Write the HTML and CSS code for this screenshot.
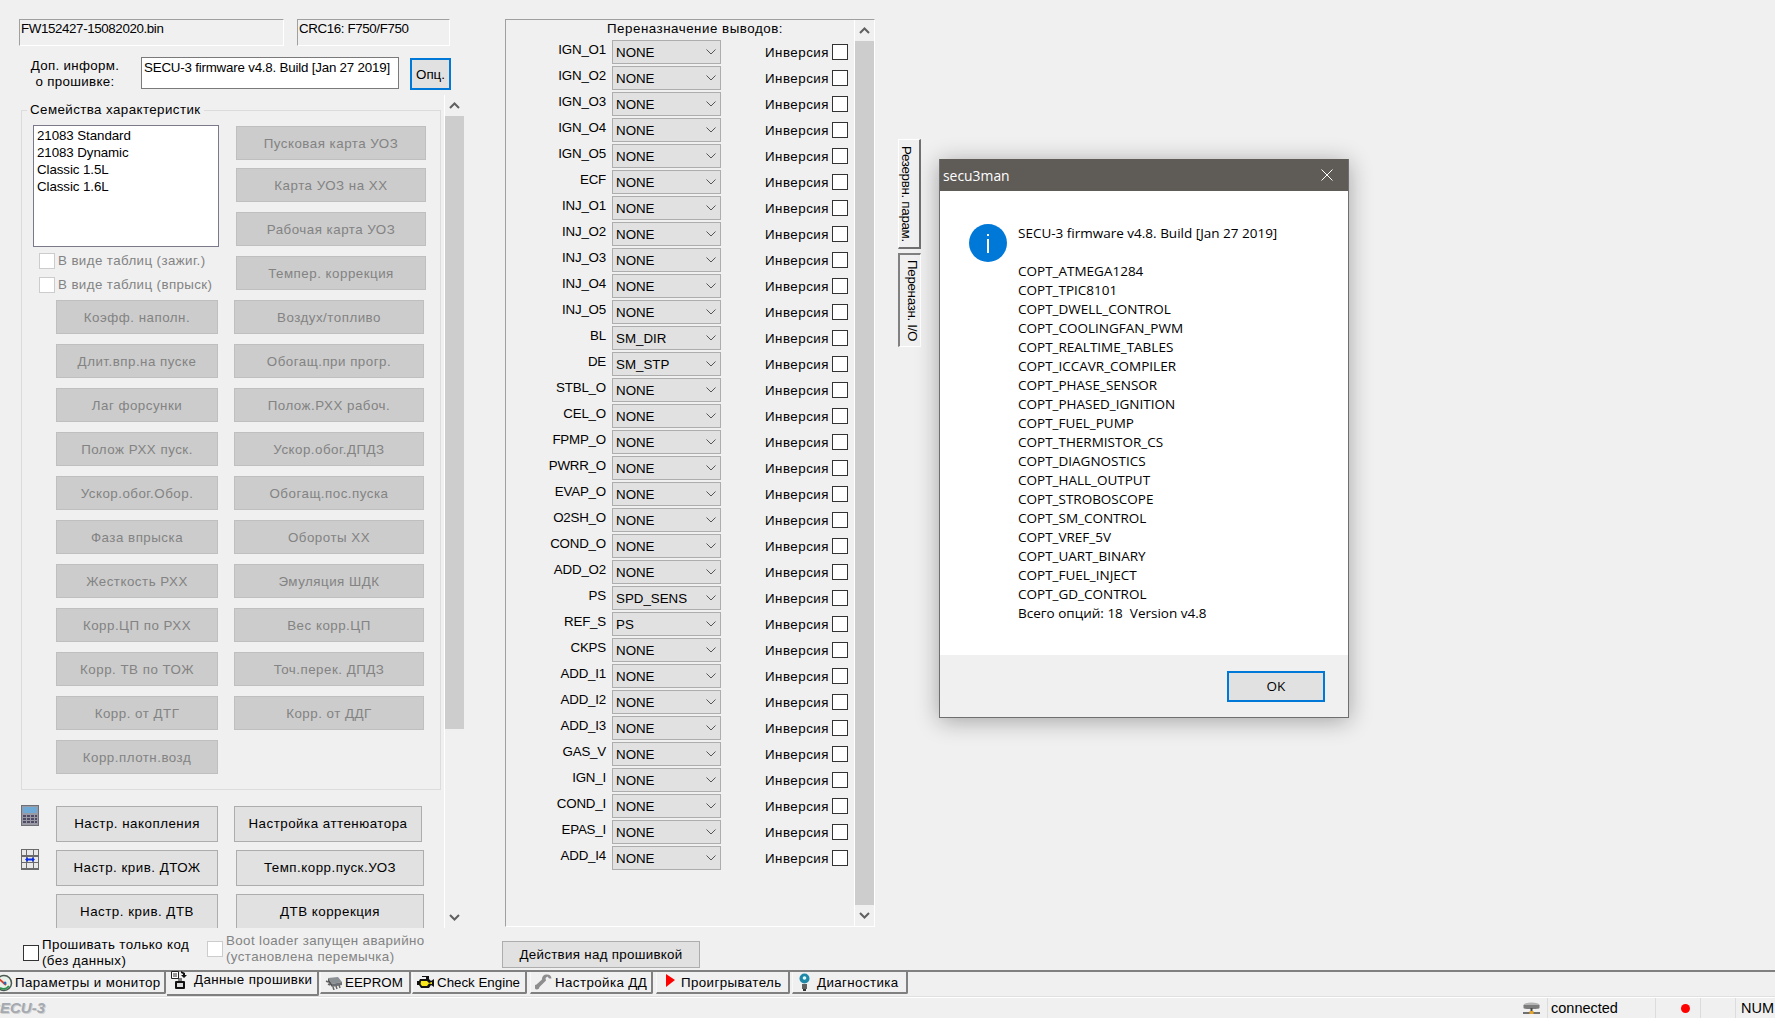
FILE: index.html
```html
<!DOCTYPE html>
<html lang="ru">
<head>
<meta charset="utf-8">
<title>secu3man</title>
<link rel="stylesheet" href="styles.css">
</head>
<body>
<div class="app">
  <div class="workspace">
    <section class="left">
      <div class="fileinfo">
        <div class="sunken name">FW152427-15082020.bin</div>
        <div class="sunken crc">CRC16: F750/F750</div>
      </div>
      <div class="inforow">
        <div class="infolabel">Доп. информ.<br>о прошивке:</div>
        <div class="edit">SECU-3 firmware v4.8. Build [Jan 27 2019]</div>
        <button class="btn opt focus">Опц.</button>
      </div>
      <div class="panel">
        <div class="panelbody">
          <div class="group">
            <div class="legend">Семейства характеристик</div>
            <div class="top">
              <div class="topleft">
                <div class="listbox">
                  <div>21083 Standard</div>
                  <div>21083 Dynamic</div>
                  <div>Classic 1.5L</div>
                  <div>Classic 1.6L</div>
                </div>
                <label class="check dis c1"><span class="box"></span>В виде таблиц (зажиг.)</label>
                <label class="check dis c2"><span class="box"></span>В виде таблиц (впрыск)</label>
              </div>
              <div class="topright">
                <button class="btn off first">Пусковая карта УОЗ</button>
                <button class="btn off">Карта УОЗ на ХХ</button>
                <button class="btn off">Рабочая карта УОЗ</button>
                <button class="btn off">Темпер. коррекция</button>
              </div>
            </div>
            <div class="pairs">
              <button class="btn off">Коэфф. наполн.</button><button class="btn off">Воздух/топливо</button>
              <button class="btn off">Длит.впр.на пуске</button><button class="btn off">Обогащ.при прогр.</button>
              <button class="btn off">Лаг форсунки</button><button class="btn off">Полож.РХХ рабоч.</button>
              <button class="btn off">Полож РХХ пуск.</button><button class="btn off">Ускор.обог.ДПДЗ</button>
              <button class="btn off">Ускор.обог.Обор.</button><button class="btn off">Обогащ.пос.пуска</button>
              <button class="btn off">Фаза впрыска</button><button class="btn off">Обороты ХХ</button>
              <button class="btn off">Жесткость РХХ</button><button class="btn off">Эмуляция ШДК</button>
              <button class="btn off">Корр.ЦП по РХХ</button><button class="btn off">Вес корр.ЦП</button>
              <button class="btn off">Корр. ТВ по ТОЖ</button><button class="btn off">Точ.перек. ДПДЗ</button>
              <button class="btn off">Корр. от ДТГ</button><button class="btn off">Корр. от ДДГ</button>
              <button class="btn off">Корр.плотн.возд</button>
            </div>
          </div>
          <div class="lower">
            <div class="lowrow">
              <span class="sideicon">
                <svg width="18" height="21" viewBox="0 0 18 21"><rect width="18" height="21" fill="#6f6f78"/><rect x="1" y="1" width="16" height="19" fill="#9a9aa4"/><rect x="2" y="2" width="14" height="6" fill="#6fa9d6"/><g fill="#4f4a66"><rect x="2" y="10" width="3" height="2"/><rect x="6" y="10" width="3" height="2"/><rect x="10" y="10" width="3" height="2"/><rect x="14" y="10" width="2" height="2"/><rect x="2" y="13" width="3" height="2"/><rect x="6" y="13" width="3" height="2"/><rect x="10" y="13" width="3" height="2"/><rect x="14" y="13" width="2" height="2"/><rect x="2" y="16" width="3" height="2"/><rect x="6" y="16" width="3" height="2"/><rect x="10" y="16" width="3" height="2"/><rect x="14" y="16" width="2" height="2"/></g></svg>
              </span>
              <button class="btn lb">Настр. накопления</button>
              <button class="btn rb gap16">Настройка аттенюатора</button>
            </div>
            <div class="lowrow">
              <span class="sideicon">
                <svg width="18" height="21" viewBox="0 0 18 21"><rect width="18" height="21" fill="#e8e8e8"/><g fill="#6a6a6a"><rect width="18" height="1"/><rect y="6" width="18" height="2"/><rect y="19" width="18" height="2"/><rect y="13" width="18" height="1"/><rect width="1" height="21"/><rect x="5" width="1" height="21"/><rect x="12" width="1" height="21"/><rect x="17" width="1" height="21"/></g><path d="M4 10.500l3-2.500v1.500h4V8l3 2.500-3 2.500v-1.500H7V13z" fill="#0a2fe8"/></svg>
              </span>
              <button class="btn lb">Настр. крив. ДТОЖ</button>
              <button class="btn rb gap18">Темп.корр.пуск.УОЗ</button>
            </div>
            <div class="lowrow">
              <span class="sideicon"></span>
              <button class="btn lb">Настр. крив. ДТВ</button>
              <button class="btn rb gap18">ДТВ коррекция</button>
            </div>
          </div>
        </div>
        <div class="scrollbar outer">
          <div class="arrow"><svg width="11" height="7" viewBox="0 0 11 7"><path d="M1 6l4.500-4.500L10 6" fill="none" stroke="#606060" stroke-width="2"/></svg></div>
          <div class="thumb lthumb"></div>
          <div class="track"></div>
          <div class="arrow"><svg width="11" height="7" viewBox="0 0 11 7"><path d="M1 1l4.500 4.500L10 1" fill="none" stroke="#606060" stroke-width="2"/></svg></div>
        </div>
      </div>
      <div class="flash">
        <label class="check code"><span class="box"></span><span>Прошивать только код<br>(без данных)</span></label>
        <label class="check dis boot"><span class="box"></span><span>Boot loader запущен аварийно<br>(установлена перемычка)</span></label>
      </div>
    </section>

    <section class="middle">
      <div class="pinframe">
        <div class="pins">
          <div class="pintitle">Переназначение выводов:</div>
          <div class="pinrow"><span class="pinname">IGN_O1</span><span class="combo">NONE</span><span class="inv">Инверсия</span><span class="box"></span></div>
          <div class="pinrow"><span class="pinname">IGN_O2</span><span class="combo">NONE</span><span class="inv">Инверсия</span><span class="box"></span></div>
          <div class="pinrow"><span class="pinname">IGN_O3</span><span class="combo">NONE</span><span class="inv">Инверсия</span><span class="box"></span></div>
          <div class="pinrow"><span class="pinname">IGN_O4</span><span class="combo">NONE</span><span class="inv">Инверсия</span><span class="box"></span></div>
          <div class="pinrow"><span class="pinname">IGN_O5</span><span class="combo">NONE</span><span class="inv">Инверсия</span><span class="box"></span></div>
          <div class="pinrow"><span class="pinname">ECF</span><span class="combo">NONE</span><span class="inv">Инверсия</span><span class="box"></span></div>
          <div class="pinrow"><span class="pinname">INJ_O1</span><span class="combo">NONE</span><span class="inv">Инверсия</span><span class="box"></span></div>
          <div class="pinrow"><span class="pinname">INJ_O2</span><span class="combo">NONE</span><span class="inv">Инверсия</span><span class="box"></span></div>
          <div class="pinrow"><span class="pinname">INJ_O3</span><span class="combo">NONE</span><span class="inv">Инверсия</span><span class="box"></span></div>
          <div class="pinrow"><span class="pinname">INJ_O4</span><span class="combo">NONE</span><span class="inv">Инверсия</span><span class="box"></span></div>
          <div class="pinrow"><span class="pinname">INJ_O5</span><span class="combo">NONE</span><span class="inv">Инверсия</span><span class="box"></span></div>
          <div class="pinrow"><span class="pinname">BL</span><span class="combo">SM_DIR</span><span class="inv">Инверсия</span><span class="box"></span></div>
          <div class="pinrow"><span class="pinname">DE</span><span class="combo">SM_STP</span><span class="inv">Инверсия</span><span class="box"></span></div>
          <div class="pinrow"><span class="pinname">STBL_O</span><span class="combo">NONE</span><span class="inv">Инверсия</span><span class="box"></span></div>
          <div class="pinrow"><span class="pinname">CEL_O</span><span class="combo">NONE</span><span class="inv">Инверсия</span><span class="box"></span></div>
          <div class="pinrow"><span class="pinname">FPMP_O</span><span class="combo">NONE</span><span class="inv">Инверсия</span><span class="box"></span></div>
          <div class="pinrow"><span class="pinname">PWRR_O</span><span class="combo">NONE</span><span class="inv">Инверсия</span><span class="box"></span></div>
          <div class="pinrow"><span class="pinname">EVAP_O</span><span class="combo">NONE</span><span class="inv">Инверсия</span><span class="box"></span></div>
          <div class="pinrow"><span class="pinname">O2SH_O</span><span class="combo">NONE</span><span class="inv">Инверсия</span><span class="box"></span></div>
          <div class="pinrow"><span class="pinname">COND_O</span><span class="combo">NONE</span><span class="inv">Инверсия</span><span class="box"></span></div>
          <div class="pinrow"><span class="pinname">ADD_O2</span><span class="combo">NONE</span><span class="inv">Инверсия</span><span class="box"></span></div>
          <div class="pinrow"><span class="pinname">PS</span><span class="combo">SPD_SENS</span><span class="inv">Инверсия</span><span class="box"></span></div>
          <div class="pinrow"><span class="pinname">REF_S</span><span class="combo">PS</span><span class="inv">Инверсия</span><span class="box"></span></div>
          <div class="pinrow"><span class="pinname">CKPS</span><span class="combo">NONE</span><span class="inv">Инверсия</span><span class="box"></span></div>
          <div class="pinrow"><span class="pinname">ADD_I1</span><span class="combo">NONE</span><span class="inv">Инверсия</span><span class="box"></span></div>
          <div class="pinrow"><span class="pinname">ADD_I2</span><span class="combo">NONE</span><span class="inv">Инверсия</span><span class="box"></span></div>
          <div class="pinrow"><span class="pinname">ADD_I3</span><span class="combo">NONE</span><span class="inv">Инверсия</span><span class="box"></span></div>
          <div class="pinrow"><span class="pinname">GAS_V</span><span class="combo">NONE</span><span class="inv">Инверсия</span><span class="box"></span></div>
          <div class="pinrow"><span class="pinname">IGN_I</span><span class="combo">NONE</span><span class="inv">Инверсия</span><span class="box"></span></div>
          <div class="pinrow"><span class="pinname">COND_I</span><span class="combo">NONE</span><span class="inv">Инверсия</span><span class="box"></span></div>
          <div class="pinrow"><span class="pinname">EPAS_I</span><span class="combo">NONE</span><span class="inv">Инверсия</span><span class="box"></span></div>
          <div class="pinrow"><span class="pinname">ADD_I4</span><span class="combo">NONE</span><span class="inv">Инверсия</span><span class="box"></span></div>
        </div>
        <div class="scrollbar inner">
          <div class="arrow"><svg width="11" height="7" viewBox="0 0 11 7"><path d="M1 6l4.500-4.500L10 6" fill="none" stroke="#606060" stroke-width="2"/></svg></div>
          <div class="thumb mthumb"></div>
          <div class="arrow"><svg width="11" height="7" viewBox="0 0 11 7"><path d="M1 1l4.500 4.500L10 1" fill="none" stroke="#606060" stroke-width="2"/></svg></div>
        </div>
      </div>
      <button class="btn action">Действия над прошивкой</button>
    </section>

    <nav class="sidetabs">
      <div class="vtab current">Резервн. парам.</div>
      <div class="vtab other">Переназн. I/O</div>
    </nav>
  </div>

  <nav class="tabbar">
    <div class="tab cy t1"><svg width="18" height="18" viewBox="0 0 18 18"><circle cx="8" cy="9" r="7.500" fill="#e8f0ea" stroke="#4a5a50" stroke-width="1.500"/><path d="M2 4l8 7" stroke="#d84030" stroke-width="2"/><path d="M4 14a7 7 0 0 0 9-2" fill="none" stroke="#2f8f4f" stroke-width="2"/><circle cx="9" cy="9" r="1.500" fill="#2b66b8"/></svg><span>Параметры и монитор</span></div>
    <div class="tab cy active t2"><svg class="ticon" width="18" height="20" viewBox="0 0 18 20"><path d="M1.500 1.500h7v7h-7z" fill="#fff" stroke="#222"/><path d="M3 4h4M3 6h4" stroke="#333"/><path d="M11 1l4 2v2h2l-3 3-3-3h2V4l-2-1z" fill="#111"/><rect x="5" y="11" width="10" height="8" rx="1" fill="#111"/><rect x="7" y="13" width="6" height="4" fill="#ddd"/><path d="M9 8v3M11 8v3" stroke="#111"/></svg><span>Данные прошивки</span></div>
    <div class="tab t3"><svg width="18" height="14" viewBox="0 0 18 14"><path d="M3 2l10-1 4 5-10 2z" fill="#8b9094"/><path d="M3 2l4 6v3L3 6z" fill="#555"/><path d="M7 8l10-2v3L7 11z" fill="#6c7074"/><path d="M1 5l2 1M3 8l2 1M8 11l1 3M11 10l1 3M14 9l1 3" stroke="#666" stroke-width="1.500"/></svg><span>EEPROM</span></div>
    <div class="tab t4"><svg width="17" height="14" viewBox="0 0 17 14"><path d="M3 3h6V1H5V0h7v3l2 2 3-2v8l-3-2-2 3H4L2 9H0V5h2z" fill="#111"/><path d="M4 5h6l2 2 3-1v2l-3-.5-2 2.500H5L3.500 8z" fill="#f6e61a"/></svg><span>Check Engine</span></div>
    <div class="tab cy t5"><svg width="17" height="17" viewBox="0 0 17 17"><path d="M12 .5a4.500 4.500 0 0 1 4.500 4l-2.500 0-1.500-2-2 1.500.5 2.500L4.500 13a2.500 2.500 0 1 1-3-2.500L7 5.500A4.500 4.500 0 0 1 12 .5z" fill="#8e8e8e"/></svg><span>Настройка ДД</span></div>
    <div class="tab cy t6"><svg class="flag" width="9" height="13" viewBox="0 0 9 13"><path d="M0 0l9 6-9 7z" fill="#f00"/></svg><span>Проигрыватель</span></div>
    <div class="tab cy t7"><svg class="bulb" width="11" height="18" viewBox="0 0 11 18"><circle cx="5.500" cy="5.500" r="5" fill="#1f87a8"/><circle cx="5.500" cy="5" r="1.800" fill="#dff"/><path d="M3 11h5v5H3z" fill="#606060"/><path d="M4 16h3v2H4z" fill="#303030"/></svg><span>Диагностика</span></div>
  </nav>

  <footer class="statusbar">
    <span class="brand">SECU-3</span>
    <span class="st stnet"><svg width="17" height="13" viewBox="0 0 17 13"><ellipse cx="8.500" cy="3" rx="8" ry="2.500" fill="#b4b4b4"/><path d="M.5 3v3c0 1.400 16 1.400 16 0V3z" fill="#7c7c7c"/><path d="M8.500 6v4" stroke="#444" stroke-width="2"/><path d="M0 11h17" stroke="#707070" stroke-width="2"/><rect x="6.500" y="9" width="4" height="3" fill="#e5a52a"/></svg></span>
    <span class="st stconn">connected</span>
    <span class="st stled"><i class="led"></i></span>
    <span class="st stblank"></span>
    <span class="st stnum">NUM</span>
  </footer>

  <div class="dialog" role="dialog">
    <header class="dtitle"><span>secu3man</span><svg width="12" height="12" viewBox="0 0 12 12"><path d="M.5.5l11 11M11.500.5l-11 11" stroke="#fff" stroke-width="1"/></svg></header>
    <div class="dbody">
      <svg class="dicon" width="38" height="38" viewBox="0 0 38 38"><circle cx="19" cy="19" r="19" fill="#0078d7"/><rect x="18" y="15" width="2" height="14" fill="#fff"/><rect x="18" y="10" width="2" height="2" fill="#fff"/></svg>
      <div class="dtext">
        <div class="dhead">SECU-3 firmware v4.8. Build [Jan 27 2019]</div>
        <div>COPT_ATMEGA1284</div>
        <div>COPT_TPIC8101</div>
        <div>COPT_DWELL_CONTROL</div>
        <div>COPT_COOLINGFAN_PWM</div>
        <div>COPT_REALTIME_TABLES</div>
        <div>COPT_ICCAVR_COMPILER</div>
        <div>COPT_PHASE_SENSOR</div>
        <div>COPT_PHASED_IGNITION</div>
        <div>COPT_FUEL_PUMP</div>
        <div>COPT_THERMISTOR_CS</div>
        <div>COPT_DIAGNOSTICS</div>
        <div>COPT_HALL_OUTPUT</div>
        <div>COPT_STROBOSCOPE</div>
        <div>COPT_SM_CONTROL</div>
        <div>COPT_VREF_5V</div>
        <div>COPT_UART_BINARY</div>
        <div>COPT_FUEL_INJECT</div>
        <div>COPT_GD_CONTROL</div>
        <div>Всего опций: 18&nbsp; Version v4.8</div>
      </div>
    </div>
    <div class="dfoot"><button class="dok">OK</button></div>
  </div>
</div>
</body>
</html>
```

FILE: styles.css
```css
* { box-sizing: border-box; }
html, body { margin: 0; height: 100%; }
body {
  background: #f0f0f0;
  color: #000;
  font: 13.33px/16px "Liberation Sans", Arial, sans-serif;
  overflow: hidden;
}
.app { position: relative; width: 1775px; height: 1018px; overflow: hidden; display: flex; flex-direction: column; }
.workspace { display: flex; height: 970px; flex: none; }

/* left column */
.left { width: 465px; flex: none; }
.fileinfo { display: flex; padding: 19px 0 0 19px; gap: 13px; }
.sunken {
  height: 27px;
  border: 1px solid;
  border-color: #a0a0a0 #fff #fff #a0a0a0;
  padding-left: 1px;
  padding-top: 1px;
  line-height: 16px;
  letter-spacing: -.38px;
}
.name { width: 265px; }
.crc { width: 153px; }
.inforow { display: flex; align-items: flex-start; padding: 11px 0 0 19px; }
.infolabel { width: 112px; margin-top: 1px; text-align: center; letter-spacing: .3px; }
.edit {
  width: 258px;
  height: 32px;
  margin-left: 10px;
  padding: 1px 0 0 2px;
  background: #fff;
  border: 1px solid #7a7a7a;
  line-height: 18px;
  letter-spacing: -.2px;
  white-space: nowrap;
}
.btn {
  display: block;
  height: 34px;
  padding: 1px 0 0;
  margin: 0;
  font: inherit;
  letter-spacing: .5px;
  color: #000;
  background: #e1e1e1;
  border: 1px solid #adadad;
}
.btn.off { background: #cccccc; border-color: #bfbfbf; color: #838383; }
.btn.focus { border: 2px solid #0078d7; }
.opt { width: 41px; height: 32px; margin: 1px 0 0 11px; letter-spacing: 0; }

.panel { display: flex; height: 833px; margin-top: 5px; overflow: hidden; }
.panelbody { width: 444px; flex: none; padding: 15px 0 0 21px; }
.group { position: relative; width: 420px; height: 680px; border: 1px solid #dcdcdc; }
.legend { position: absolute; left: 5px; top: -9px; padding: 0 3px; background: #f0f0f0; letter-spacing: .42px; }
.top { display: flex; padding: 14px 0 0 11px; }
.topleft { width: 186px; }
.topright { width: 190px; margin: 1px 0 0 17px; }
.topright .btn { width: 190px; margin-bottom: 10px; }
.topright .first { margin-bottom: 8px; }
.listbox { height: 122px; padding: 1px 3px; background: #fff; border: 1px solid #7a7a8a; line-height: 17px; letter-spacing: -.08px; }
.box { display: block; flex: none; width: 16px; height: 16px; background: #fff; border: 1px solid #333; }
.check { display: flex; gap: 3px; letter-spacing: .4px; }
.check.dis { color: #838383; }
.check.dis .box { border-color: #cccccc; }
.c1 { margin: 6px 0 0 6px; }
.c2 { margin: 8px 0 0 6px; }
.pairs { display: grid; grid-template-columns: 162px 190px; column-gap: 16px; row-gap: 10px; padding: 0 0 0 34px; }
.lower { padding: 16px 0 0; }
.lowrow { display: flex; margin-bottom: 8px; }
.sideicon { width: 35px; height: 36px; margin-top: -1px; }
.sideicon svg { display: block; }
.lb { width: 162px; height: 36px; padding: 0; }
.rb { width: 188px; height: 36px; padding: 0; }
.gap16 { margin-left: 16px; }
.gap18 { margin-left: 18px; }

.scrollbar { display: flex; flex-direction: column; width: 20px; flex: none; border-left: 1px solid #fff; }
.arrow { height: 21px; flex: none; display: flex; align-items: center; justify-content: center; }
.thumb { background: #cdcdcd; }
.track { flex: 1; }
.lthumb { height: 613px; }
.mthumb { flex: 1; }

.flash { display: flex; }
.code { margin: 9px 0 0 23px; width: 184px; }
.code .box { margin-top: 8px; }
.boot { margin-top: 5px; }
.boot .box { margin-top: 8px; }

/* middle column */
.middle { width: 410px; flex: none; padding: 19px 0 0 40px; }
.pinframe {
  display: flex;
  width: 370px;
  height: 908px;
  border: 1px solid;
  border-color: #a0a0a0 #fff #fff #a0a0a0;
}
.pins { flex: 1; }
.pintitle { height: 20px; padding: 1px 0 0 101px; letter-spacing: .52px; }
.pinrow { display: flex; align-items: flex-start; height: 26px; }
.pinname { width: 100px; text-align: right; margin-top: 2px; letter-spacing: -.2px; }
.combo {
  display: block;
  width: 109px;
  height: 24px;
  margin-left: 6px;
  padding: 4px 0 0 3px;
  background: #e1e1e1 url("data:image/svg+xml,%3Csvg xmlns='http://www.w3.org/2000/svg' width='10' height='6'%3E%3Cpath d='M.5.5l4.500 4.500L9.500.5' fill='none' stroke='%23555'/%3E%3C/svg%3E") no-repeat right 4px center;
  border: 1px solid #adadad;
}
.inv { width: 64px; margin: 5px 3px 0 44px; white-space: nowrap; letter-spacing: .5px; }
.pinrow .box { margin-top: 4px; }
.inner { width: 20px; }
.action { width: 198px; height: 27px; margin: 14px 0 0 -3px; letter-spacing: .3px; }

/* vertical tabs */
.sidetabs { padding: 139px 0 0 23px; display: flex; flex-direction: column; gap: 4px; }
.vtab { writing-mode: vertical-rl; width: 23px; border: 1px solid; padding: 6px 0 0 0; white-space: nowrap; letter-spacing: -.3px; }
.current { height: 110px; border-color: #fff #707070 #707070 #fff; border-width: 1px 2px 2px 1px; padding-right: 5px; }
.other { height: 94px; padding-top: 5px; border-color: #808080 #fff #fff #808080; border-width: 2px 1px 1px 2px; }

/* bottom tabs */
.tabbar { display: flex; height: 27px; flex: none; border-top: 2px solid #808080; border-bottom: 1px solid #e0e0e0; }
.tab {
  display: flex;
  align-items: center;
  gap: 3px;
  height: 22px;
  padding-left: 4px;
  padding-top: 1px;
  border: 1px solid;
  border-width: 0 2px 2px 1px;
  border-color: #f8f8f8 #808080 #808080 #f8f8f8;
  border-bottom-right-radius: 2px;
  white-space: nowrap;
}
.cy { letter-spacing: .4px; }
.tab.active { height: 24px; padding-top: 0; align-items: flex-start; border-left: 0; }
.ticon { margin-top: -2px; }
.t1 { width: 168px; margin-left: -2px; padding-left: 0; gap: 1px; }
.t1 svg { margin-left: -3px; }
.t2 { width: 152px; margin-left: 1px; padding-left: 3px; gap: 6px; }
.t3 { width: 91px; margin-left: 1px; gap: 2px; }
.t4 { width: 115px; margin-left: 1px; gap: 3px; }
.t5 { width: 123px; margin-left: 3px; }
.t6 { width: 134px; margin-left: 3px; padding-left: 9px; gap: 6px; }
.t7 { width: 116px; margin-left: 2px; padding-left: 6px; gap: 7px; }
.flag { margin-top: -5px; }
.bulb { margin-top: -2px; }

/* status bar */
.statusbar { display: flex; flex: 1; align-items: center; border-top: 1px solid #fff; }
.brand {
  margin-left: -10px;
  font: italic bold 15px/20px "Liberation Sans", Arial, sans-serif;
  color: #a5a9b0;
  text-shadow: 1px 1px 0 #d0d0d0;
}
.st { display: flex; align-items: center; height: 20px; }
.stnet { margin-left: auto; width: 24px; }
.stconn { width: 108px; padding-left: 3px; border-left: 1px solid #dcdcdc; font-size: 14.5px; }
.stled { width: 45px; padding-left: 25px; border-left: 1px solid #dcdcdc; }
.stblank { width: 35px; border-left: 1px solid #dcdcdc; }
.stnum { width: 40px; padding-left: 5px; border-left: 1px solid #dcdcdc; font-size: 14.5px; }
.led { display: block; width: 9px; height: 9px; border-radius: 50%; background: #f00; }

/* message box */
.dialog {
  position: absolute;
  left: 939px;
  top: 159px;
  width: 410px;
  height: 559px;
  display: flex;
  flex-direction: column;
  background: #fff;
  border: 1px solid #6f6f6f;
  border-top: 0;
  box-shadow: 0 3px 22px rgba(0, 0, 0, .32);
  font: 13.5px/19px "Open Sans", "Noto Sans", sans-serif;
}
.dtitle {
  display: flex;
  align-items: center;
  justify-content: space-between;
  height: 32px;
  flex: none;
  padding: 0 15px 0 3px;
  background: #5f5b57;
  color: #fff;
}
.dtitle span { font-size: 13.9px; }
.dbody { display: flex; flex: 1; padding: 33px 0 0 29px; }
.dicon { flex: none; }
.dtext { margin: 0 0 0 11px; color: #000; }
.dhead { margin-bottom: 19px; }
.dfoot { height: 62px; flex: none; padding: 16px 0 0 287px; background: #f0f0f0; }
.dok {
  display: block;
  width: 98px;
  height: 31px;
  padding: 0;
  font: inherit;
  color: #000;
  background: #e1e1e1;
  border: 2px solid #0078d7;
}
```
